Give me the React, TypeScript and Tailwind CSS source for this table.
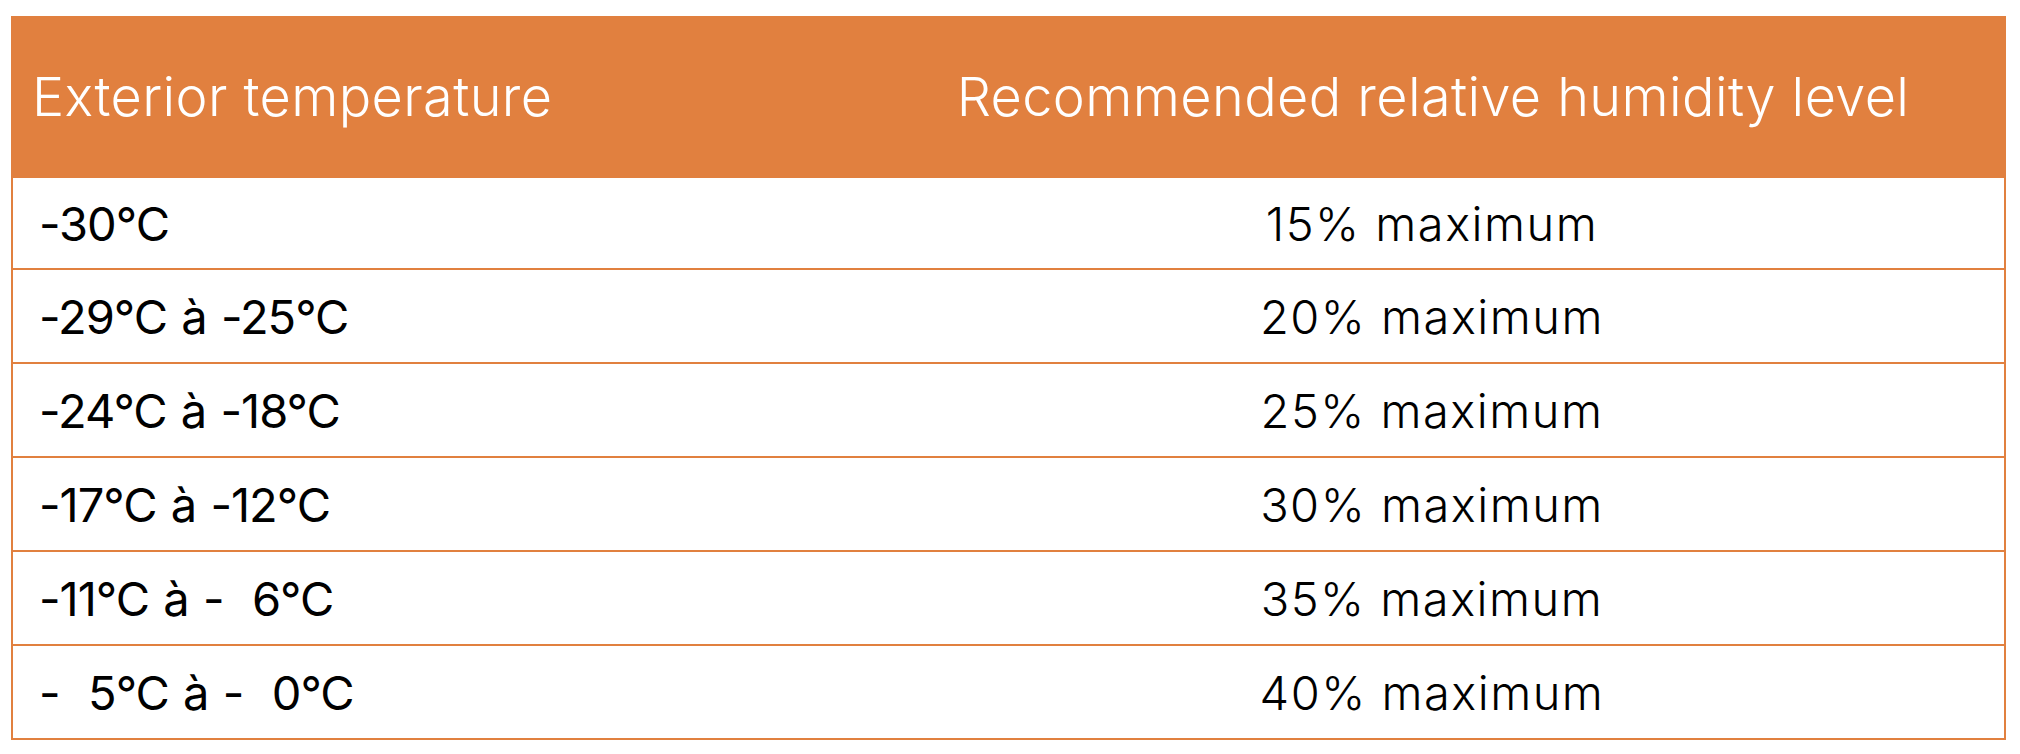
import React from "react";

const rows: [string, string][] = [
  ["-30°C", "15% maximum"],
  ["-29°C à -25°C", "20% maximum"],
  ["-24°C à -18°C", "25% maximum"],
  ["-17°C à -12°C", "30% maximum"],
  ["-11°C à -  6°C", "35% maximum"],
  ["-  5°C à -  0°C", "40% maximum"],
];

export default function App() {
  return (
    <div
      className="w-[2020px] h-[754px] bg-white pt-[16px] pl-[11px]"
      style={{ fontFamily: "Inter, 'Open Sans', sans-serif" }}
    >
      <div className="w-[1995px]">
        <div className="flex h-[162px] items-center bg-[#e1803f] text-white text-[54px] tracking-[0.4px] font-light leading-none">
          <div className="w-[849px] pl-[21px]">Exterior temperature</div>
          <div className="flex-1 text-center">Recommended relative humidity level</div>
        </div>
        {rows.map(([t, h], i) => (
          <div
            key={i}
            className={`flex items-center border-x-2 border-b-2 border-[#e1803f] text-[47px] leading-none text-black ${
              i === 0 ? "h-[92px]" : "h-[94px]"
            }`}
          >
            <div className="w-[847px] pl-[26px] whitespace-pre font-normal tracking-[-1px] [word-spacing:2px]">{t}</div>
            <div className="flex-1 text-center whitespace-pre font-light tracking-[1.5px]">{h}</div>
          </div>
        ))}
      </div>
    </div>
  );
}
